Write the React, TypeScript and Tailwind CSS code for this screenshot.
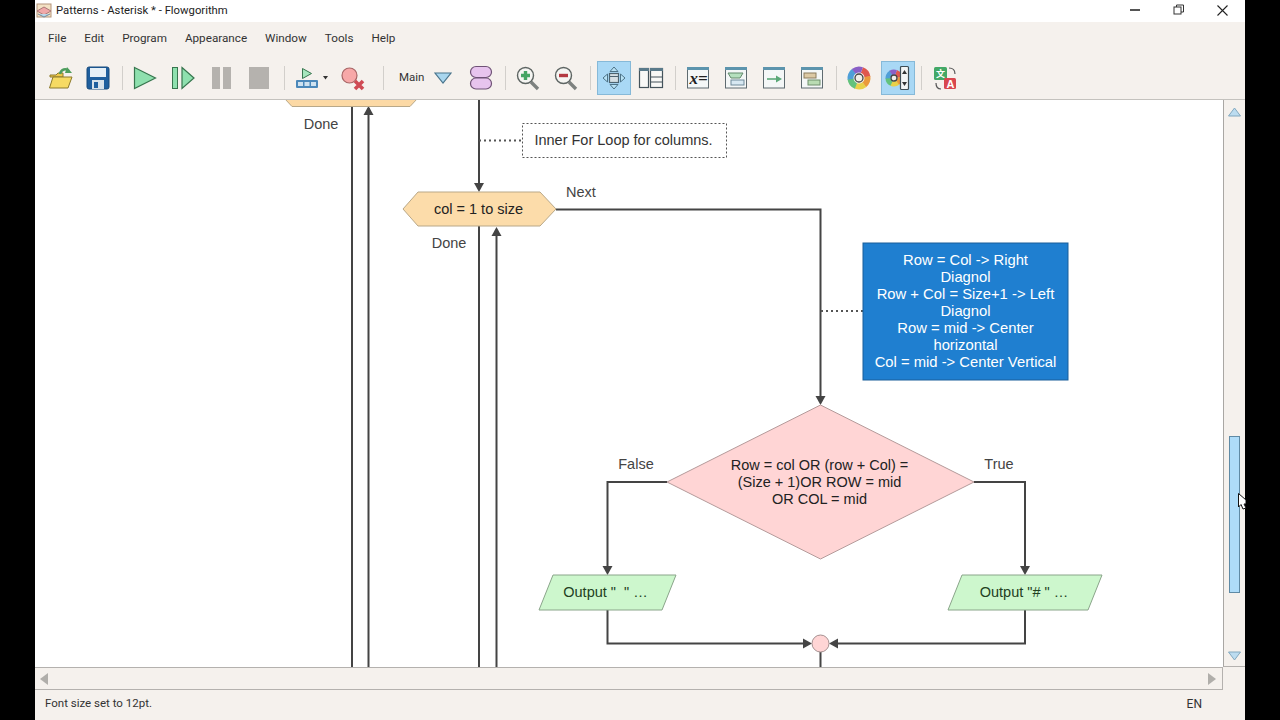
import React from "react";

const Sep = () => <div className="w-px h-[24px] bg-[#d2cfcb] shrink-0" />;
const Gap = ({ w }: { w: number }) => <div className="shrink-0" style={{ width: w }} />;

function Ico({ w = 26, children }: { w?: number; children: React.ReactNode }) {
  return (
    <svg width={w} height="26" viewBox={`0 0 ${w} 26`} className="shrink-0">
      {children}
    </svg>
  );
}

const Win = ({ children }: { children: React.ReactNode }) => (
  <Ico w={24}>
    <rect x="1.5" y="2.5" width="21" height="20.5" fill="#f4f7f7" stroke="#5f6b70" />
    <rect x="1" y="2" width="22" height="3" fill="#5c94ad" />
    {children}
  </Ico>
);

const WHEEL = ["#e0574f", "#eb9a3c", "#e8d14a", "#62c27c", "#4f9fd8", "#8a5fc6"];
const Wheel = ({ cx, cy, r, sw, hole }: { cx: number; cy: number; r: number; sw: number; hole: number }) => {
  const c = 2 * Math.PI * r;
  return (
    <g>
      {WHEEL.map((col, i) => (
        <circle
          key={col}
          cx={cx}
          cy={cy}
          r={r}
          fill="none"
          stroke={col}
          strokeWidth={sw}
          strokeDasharray={`${c / 6 + 0.3} ${c}`}
          strokeDashoffset={(-c * i) / 6}
          transform={`rotate(-70 ${cx} ${cy})`}
        />
      ))}
      <circle cx={cx} cy={cy} r={hole} fill="#f2efe8" stroke="#444" strokeWidth="1.3" />
    </g>
  );
};

const Toolbar = () => (
  <div className="h-[44px] flex items-center pl-[12px] pt-[2px] shrink-0">
    <Ico>
      <path d="M3 10 h6 l2 -2 h5 v4 h-13z" fill="#f0c84a" stroke="#8c7a2c" />
      <path d="M2.5 23 L6 12 H25 L21 23 Z" fill="#f6da63" stroke="#8c7a2c" />
      <path d="M13 9 C14 4 19 3 22 6" fill="none" stroke="#4e9d5d" strokeWidth="2.4" />
      <path d="M20 2 L25 8 L18 8 Z" fill="#4e9d5d" />
    </Ico>
    <Gap w={12} />
    <Ico>
      <rect x="2" y="2" width="22" height="22" rx="2" fill="#1f5f9e" stroke="#174a7c" />
      <rect x="5" y="3" width="16" height="9" fill="#e6f0f7" />
      <rect x="7" y="15" width="12" height="9" fill="#d8e2ea" />
      <rect x="9" y="17" width="4" height="6" fill="#1f5f9e" />
    </Ico>
    <Gap w={11} />
    <Sep />
    <Gap w={9} />
    <Ico>
      <path d="M2.5 2.5 L23.5 13 L2.5 23.5 Z" fill="#8ee0ae" stroke="#37764e" strokeWidth="1.2" />
    </Ico>
    <Gap w={12} />
    <Ico>
      <rect x="2.5" y="2.5" width="5" height="21" fill="#8ee0ae" stroke="#37764e" />
      <path d="M12 2.5 L24 13 L12 23.5 Z" fill="#8ee0ae" stroke="#37764e" strokeWidth="1.2" />
    </Ico>
    <Gap w={12} />
    <Ico>
      <rect x="4" y="2" width="8" height="22" fill="#b5b2ae" />
      <rect x="15" y="2" width="8" height="22" fill="#b5b2ae" />
    </Ico>
    <Gap w={12} />
    <Ico>
      <rect x="3" y="2" width="20" height="22" fill="#b5b2ae" />
    </Ico>
    <Gap w={12} />
    <Sep />
    <Gap w={8} />
    <Ico>
      <path d="M9.5 3.5 L18.5 8.5 L9.5 13.5 Z" fill="#a6e6bd" stroke="#37764e" />
      <rect x="3" y="15" width="22" height="8" rx="1" fill="#4b88ba" />
      <rect x="5" y="17" width="5" height="4" fill="#cfe2f0" />
      <rect x="11.5" y="17" width="5" height="4" fill="#cfe2f0" />
      <rect x="18" y="17" width="5" height="4" fill="#cfe2f0" />
    </Ico>
    <svg width="6" height="4" className="ml-[4px] mr-[10px] shrink-0" viewBox="0 0 6 4">
      <path d="M0 0 H5 L2.5 3.5Z" fill="#333" />
    </svg>
    <Ico>
      <circle cx="10.5" cy="10.5" r="7.5" fill="#f7a8a8" stroke="#a86565" strokeWidth="1.2" />
      <path d="M16 16 L24 24 M24 16 L16 24" stroke="#cf4a54" strokeWidth="3.6" />
    </Ico>
    <Gap w={18} />
    <Sep />
    <Gap w={15} />
    <span className="text-[11.5px] text-[#333] w-[26px] shrink-0">Main</span>
    <Gap w={9} />
    <Ico w={18}>
      <path d="M1 8 H17 L9 18 Z" fill="#a9d6ee" stroke="#49748c" strokeWidth="1.2" />
    </Ico>
    <Gap w={16} />
    <Ico>
      <rect x="2.5" y="1.5" width="21" height="11" rx="5.5" fill="#e7c4ee" stroke="#6f5276" strokeWidth="1.2" />
      <rect x="2.5" y="13" width="21" height="11" rx="5.5" fill="#e7c4ee" stroke="#6f5276" strokeWidth="1.2" />
    </Ico>
    <Gap w={11} />
    <Sep />
    <Gap w={9} />
    <Ico>
      <path d="M16 17 L23 24" stroke="#7d817f" strokeWidth="3.4" />
      <circle cx="10.5" cy="10.5" r="8" fill="#f5f5f2" stroke="#5e6563" strokeWidth="1.4" />
      <path d="M10.5 6 V15 M6 10.5 H15" stroke="#45a463" strokeWidth="3.4" />
    </Ico>
    <Gap w={12} />
    <Ico>
      <path d="M16 17 L23 24" stroke="#7d817f" strokeWidth="3.4" />
      <circle cx="10.5" cy="10.5" r="8" fill="#f5f5f2" stroke="#5e6563" strokeWidth="1.4" />
      <path d="M6 10.5 H15" stroke="#b43a42" strokeWidth="3.4" />
    </Ico>
    <Gap w={11} />
    <Sep />
    <Gap w={6} />
    <div className="w-[34px] h-[34px] shrink-0 bg-[#a9d8f5] border border-[#86b9d8] flex items-center justify-center">
      <svg width="26" height="26" viewBox="0 0 26 26">
        <path d="M13 2 L17 6.5 H9Z M13 24 L17 19.5 H9Z M2 13 L6.5 9 V17Z M24 13 L19.5 9 V17Z" fill="#b8e2f5" stroke="#4d7388" />
        <rect x="8.5" y="8.5" width="9" height="9" fill="#d5dfe4" stroke="#4d6470" strokeWidth="1.2" />
        <path d="M8.5 11.5 H17.5" stroke="#4d6470" />
      </svg>
    </div>
    <Gap w={7} />
    <Ico w={26}>
      <rect x="1.5" y="3.5" width="9" height="19" fill="#f8f8f6" stroke="#44535b" strokeWidth="1.2" />
      <rect x="1" y="3" width="10" height="3" fill="#5a7a8a" />
      <rect x="12.5" y="3.5" width="12" height="19" fill="#f8f8f6" stroke="#44535b" strokeWidth="1.2" />
      <rect x="12" y="3" width="13" height="3" fill="#5a7a8a" />
      <path d="M13 12 H24 M13 17 H24" stroke="#44535b" strokeWidth="1.2" />
    </Ico>
    <Gap w={11} />
    <Sep />
    <Gap w={10} />
    <Win>
      <text x="3.5" y="19" fontFamily="'Liberation Serif', serif" fontStyle="italic" fontWeight="700" fontSize="17" fill="#222">x=</text>
    </Win>
    <Gap w={14} />
    <Win>
      <path d="M4 8 H19 L16 13 H7 Z" fill="#b5e0be" stroke="#638a6d" />
      <rect x="7" y="15" width="13" height="5" fill="#d7e8f2" stroke="#6f8a9a" />
    </Win>
    <Gap w={14} />
    <Win>
      <path d="M5 14 H15" stroke="#5aa878" strokeWidth="1.6" />
      <path d="M14 10.5 L20 14 L14 17.5 Z" fill="#5aa878" />
    </Win>
    <Gap w={14} />
    <Win>
      <rect x="4" y="8" width="12" height="5" fill="#dcc9a4" stroke="#8a7c5e" />
      <rect x="8" y="15" width="12" height="5" fill="#b9dcb3" stroke="#6f8f6c" />
    </Win>
    <Gap w={12} />
    <Sep />
    <Gap w={9} />
    <Ico>
      <Wheel cx={13} cy={13} r={8.5} sw={6} hole={4} />
    </Ico>
    <Gap w={9} />
    <div className="w-[34px] h-[34px] shrink-0 bg-[#a9d8f5] border border-[#86b9d8] flex items-center justify-center">
      <svg width="28" height="28" viewBox="0 0 28 28">
        <Wheel cx={10} cy={14} r={6} sw={5} hole={3} />
        <rect x="16.5" y="2.5" width="8" height="23" rx="1" fill="#f3f5f5" stroke="#3e4d55" strokeWidth="1.2" />
        <path d="M20.5 6 L23 10 H18Z M20.5 22 L23 18 H18Z" fill="#333" />
      </svg>
    </div>
    <Gap w={6} />
    <Sep />
    <Gap w={10} />
    <Ico>
      <rect x="2" y="2" width="13" height="13" rx="1.5" fill="#43a866" />
      <rect x="12" y="13" width="12" height="11" rx="1.5" fill="#d9474f" />
      <text x="4" y="12" fontFamily="'Noto Sans CJK SC', sans-serif" fontSize="9" fontWeight="700" fill="#fff">文</text>
      <text x="14.5" y="23" fontFamily="'Liberation Sans', sans-serif" fontSize="11" fontWeight="700" fill="#fff">A</text>
      <path d="M17 3 C21 3 23 5 23 9 M4 18 C4 22 6 24 9 24" fill="none" stroke="#555" strokeWidth="1.2" />
    </Ico>
  </div>
);

const Arrow = ({ x, y, d }: { x: number; y: number; d: "d" | "u" | "l" | "r" }) => {
  const p = {
    d: `${x - 5},${y - 9} ${x + 5},${y - 9} ${x},${y}`,
    u: `${x - 5},${y + 9} ${x + 5},${y + 9} ${x},${y}`,
    r: `${x - 9},${y - 5} ${x - 9},${y + 5} ${x},${y}`,
    l: `${x + 9},${y - 5} ${x + 9},${y + 5} ${x},${y}`,
  }[d];
  return <polygon points={p} fill="#444" />;
};

const Label = ({ x, y, w, h, cls, children }: { x: number; y: number; w: number; h: number; cls?: string; children: React.ReactNode }) => (
  <div
    className={`absolute flex items-center justify-center text-center whitespace-pre font-['Liberation_Sans',sans-serif] leading-[17px] ${cls ?? "text-[#444] text-[14.5px]"}`}
    style={{ left: x - 35, top: y - 100, width: w, height: h }}
  >
    {children}
  </div>
);

const Canvas = () => (
  <div className="flex-1 relative overflow-hidden bg-white">
    <svg className="absolute left-0 top-0" width="1188" height="567" viewBox="35 100 1188 567">
      <g stroke="#444" strokeWidth="2" fill="none">
        <path d="M352 100 V667 M368.5 108 V667 M479 100 V184 M479 226 V667 M496.5 234 V667" />
        <path d="M556 209.5 H820.5 V397 M667 482 H607.5 V567 M974 482 H1025 V567 M607.5 610 V643.5 H804 M1025 610 V643.5 H838 M820.5 652 V667" />
      </g>
      <path d="M479 140.5 H522 M821 311 H863" stroke="#555" strokeWidth="2" strokeDasharray="2 3" fill="none" />
      <Arrow x={368.5} y={106} d="u" />
      <Arrow x={479} y={192} d="d" />
      <Arrow x={496.5} y={227} d="u" />
      <Arrow x={820.5} y={405} d="d" />
      <Arrow x={607.5} y={575} d="d" />
      <Arrow x={1025} y={575} d="d" />
      <Arrow x={812} y={643.5} d="r" />
      <Arrow x={829} y={643.5} d="l" />
      <polygon points="285,99 417,99 410,106.5 292,106.5" fill="#fcd9a5" stroke="#b9a888" />
      <polygon points="403,209 418,192 540,192 556,209 540,226 418,226" fill="#fcdcaa" stroke="#b9a888" />
      <polygon points="820.5,405 974,482 820.5,559 667,482" fill="#ffd5d5" stroke="#b49a9a" />
      <polygon points="553,575 676,575 662,610 539,610" fill="#cdf7cd" stroke="#8aa58a" />
      <polygon points="962,575 1102,575 1088,610 948,610" fill="#cdf7cd" stroke="#8aa58a" />
      <circle cx="820.5" cy="643.5" r="8.5" fill="#ffd5d5" stroke="#a59090" />
      <rect x="522.5" y="123.5" width="204" height="34" fill="#fff" stroke="#555" strokeDasharray="2 2" />
      <rect x="863" y="243" width="205" height="137" fill="#1f7fd0" stroke="#1a5f9a" />
    </svg>
    <Label x={283} y={116} w={76} h={17}>Done</Label>
    <Label x={411} y={235} w={76} h={17}>Done</Label>
    <Label x={543} y={184} w={76} h={17}>Next</Label>
    <Label x={598} y={456} w={76} h={17}>False</Label>
    <Label x={961} y={456} w={76} h={17}>True</Label>
    <Label x={521} y={123} w={205} h={35} cls="text-[#333] text-[14.5px]">Inner For Loop for columns.</Label>
    <Label x={402} y={192} w={153} h={34} cls="text-[#222] text-[14.5px]">col = 1 to size</Label>
    <Label x={863} y={243} w={205} h={137} cls="text-white text-[14.8px]">{"Row = Col -> Right\nDiagnol\nRow + Col = Size+1 -> Left\nDiagnol\nRow = mid -> Center\nhorizontal\nCol = mid -> Center Vertical"}</Label>
    <Label x={666} y={405} w={307} h={154} cls="text-[#222] text-[14.5px]">{"Row = col OR (row + Col) =\n(Size + 1)OR ROW = mid\nOR COL = mid"}</Label>
    <Label x={537} y={575} w={137} h={35} cls="text-[#224022] text-[14.5px]">{'Output "  " …'}</Label>
    <Label x={947} y={575} w={154} h={35} cls="text-[#224022] text-[14.5px]">{'Output "# " …'}</Label>
  </div>
);

export default function App() {
  return (
    <div className="w-[1280px] h-[720px] bg-black px-[35px] overflow-hidden">
      <div className="w-[1210px] h-[720px] flex flex-col bg-[#f5f1ed] font-['Roboto',sans-serif] text-[#333]">
        <div className="h-[22px] bg-white flex items-center relative shrink-0">
          <svg width="16" height="16" viewBox="0 0 16 16" className="ml-[1px]">
            <rect x="1" y="1" width="14" height="13" fill="#f3e1c4" stroke="#b4947a" />
            <path d="M1 8 L8 4 L15 8 L8 12Z" fill="#f0a8a8" stroke="#a77" />
            <path d="M2 11 L8 14 L14 11" fill="#b8d8ea" stroke="#789" />
          </svg>
          <span className="ml-[4px] text-[11.3px] text-[#222]">Patterns - Asterisk * - Flowgorithm</span>
          <div className="ml-auto flex items-center h-full -mt-[2px]">
            <div className="w-[10px] h-[1.5px] bg-[#555]" />
            <svg width="12" height="12" viewBox="0 0 12 12" className="ml-[33px]" fill="none" stroke="#333">
              <rect x="1" y="3" width="7" height="7" fill="#fff" />
              <path d="M3.5 3 V1 H10.5 V8 H8" />
            </svg>
            <svg width="11" height="11" viewBox="0 0 11 11" className="ml-[32px] mr-[17px]" fill="none" stroke="#222" strokeWidth="1.1">
              <path d="M0.5 0.5 L10.5 10.5 M10.5 0.5 L0.5 10.5" />
            </svg>
          </div>
        </div>
        <div className="h-[33px] flex items-center pl-[13px] gap-[18px] text-[11.7px] shrink-0">
          {["File", "Edit", "Program", "Appearance", "Window", "Tools", "Help"].map((m) => (
            <span key={m}>{m}</span>
          ))}
        </div>
        <Toolbar />
        <div className="flex h-[568px] border-t border-t-[#c4c2be] shrink-0">
          <Canvas />
          <div className="w-[22px] border-l border-l-[#a9a7a4] border-b border-b-[#b4b1ae] flex flex-col items-center relative">
            <svg width="13" height="10" viewBox="0 0 13 10" className="mt-[7px]">
              <path d="M6.5 1 L12.5 9 H0.5Z" fill="#bcdcf0" stroke="#82a8bf" />
            </svg>
            <div className="w-[11px] h-[157px] bg-[#aedcf9] border border-[#5f8aa5] mt-[319px]" />
            <svg width="13" height="10" viewBox="0 0 13 10" className="mt-[58px]">
              <path d="M6.5 9 L12.5 1 H0.5Z" fill="#bcdcf0" stroke="#82a8bf" />
            </svg>
            <svg width="8" height="17" viewBox="0 0 8 17" className="absolute left-[14px] top-[393px]">
              <path d="M0.5 0.5 V14 L3 11.5 L5 16 L8 15 L6 11 H8 V7Z" fill="#fff" stroke="#111" />
            </svg>
          </div>
        </div>
        <div className="h-[23px] border-y border-r border-[#b4b1ae] mr-[22px] flex items-center justify-between pl-[5px] pr-[6px] shrink-0">
          <svg width="9" height="12" viewBox="0 0 9 12"><path d="M8 0 V12 L0 6Z" fill="#b0aeaa" /></svg>
          <svg width="9" height="12" viewBox="0 0 9 12"><path d="M1 0 V12 L9 6Z" fill="#b0aeaa" /></svg>
        </div>
        <div className="flex-1 flex items-center pl-[10px] pr-[43px] pb-[2px] justify-between text-[11.5px]">
          <span>Font size set to 12pt.</span>
          <span className="text-[12px]">EN</span>
        </div>
      </div>
    </div>
  );
}
